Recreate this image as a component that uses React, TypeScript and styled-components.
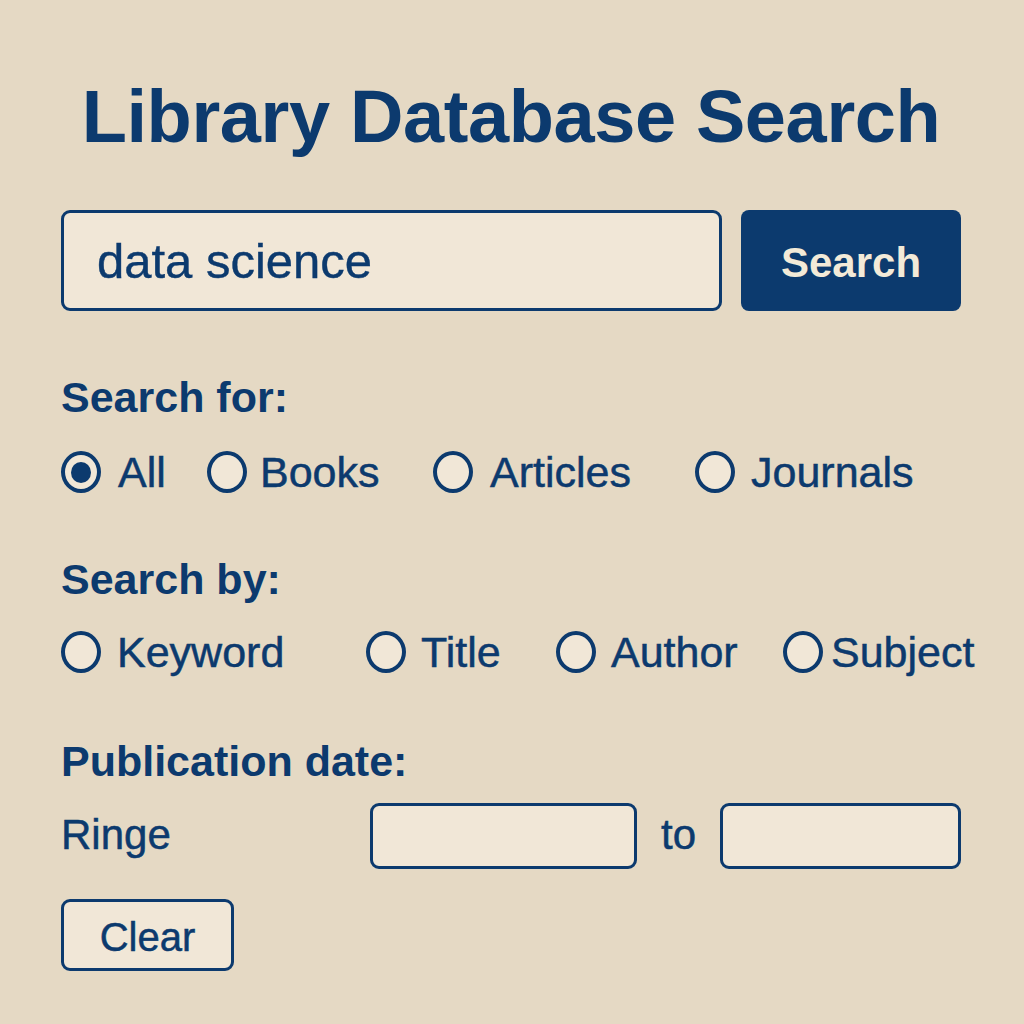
import React from "react";
import styled, { createGlobalStyle } from "styled-components";

const NAVY = "#0c3a6e";
const PAPER = "#e5d9c4";
const FIELD = "#f1e7d7";

const Global = createGlobalStyle`
  html, body { margin: 0; padding: 0; background: ${PAPER}; }
  body { font-family: "Liberation Sans", Arial, sans-serif; color: ${NAVY}; }
  * { box-sizing: border-box; }
`;

const Page = styled.main`
  width: 1024px;
  min-height: 1024px;
  padding: 74px 63px 0 61px;
  display: flex;
  flex-direction: column;
`;

const Title = styled.h1`
  margin: 0;
  font-size: 74px;
  line-height: 85px;
  font-weight: 700;
  text-align: center;
  letter-spacing: -0.4px;
  color: ${NAVY};
`;

const SearchRow = styled.div`
  margin-top: 51px;
  display: flex;
  gap: 19px;
  height: 101px;
`;

const QueryBox = styled.div`
  width: 661px;
  border: 3px solid ${NAVY};
  border-radius: 9px;
  background: ${FIELD};
  display: flex;
  align-items: center;
  padding-left: 33px;
  font-size: 49px;
  padding-top: 1px;
  -webkit-text-stroke: 0.4px ${NAVY};
`;

const SearchButton = styled.button`
  flex: 1;
  border: none;
  border-radius: 8px;
  background: ${NAVY};
  color: #f3ead8;
  font-family: inherit;
  font-size: 42px;
  font-weight: 700;
  padding: 5px 0 0;
`;

const Heading = styled.h2<{ $gap: number }>`
  margin: ${(p) => p.$gap}px 0 0;
  font-size: 43px;
  line-height: 52px;
  font-weight: 700;
  color: ${NAVY};
`;

const RadioRow = styled.div<{ $gap: number }>`
  margin-top: ${(p) => p.$gap}px;
  display: flex;
  align-items: center;
  height: 44px;
`;

const Option = styled.label<{ $width?: number; $labelGap?: number }>`
  display: flex;
  align-items: center;
  gap: ${(p) => p.$labelGap ?? 16}px;
  width: ${(p) => (p.$width ? `${p.$width}px` : "auto")};
  flex: none;
  font-size: 43px;
  line-height: 44px;
  -webkit-text-stroke: 0.5px ${NAVY};
`;

const Circle = styled.span<{ $on?: boolean }>`
  width: 40px;
  height: 42px;
  border-radius: 50%;
  border: 4px solid ${NAVY};
  background: ${FIELD};
  display: flex;
  align-items: center;
  justify-content: center;
  flex: none;
  &::after {
    content: "";
    display: ${(p) => (p.$on ? "block" : "none")};
    width: 20px;
    height: 21px;
    border-radius: 50%;
    background: ${NAVY};
  }
`;

const DateRow = styled.div`
  margin-top: 16px;
  display: flex;
  align-items: center;
  height: 66px;
  font-size: 42px;
  -webkit-text-stroke: 0.5px ${NAVY};
`;

const RangeLabel = styled.span`
  width: 309px;
  flex: none;
  padding-bottom: 2px;
`;

const DateField = styled.div<{ $width: number }>`
  width: ${(p) => p.$width}px;
  height: 66px;
  border: 3px solid ${NAVY};
  border-radius: 9px;
  background: ${FIELD};
  flex: none;
`;

const To = styled.span`
  margin: 0 24px 0 24px;
  padding-bottom: 2px;
`;

const ClearButton = styled.button`
  margin-top: 30px;
  width: 173px;
  height: 72px;
  border: 3px solid ${NAVY};
  border-radius: 9px;
  background: ${FIELD};
  color: ${NAVY};
  font-family: inherit;
  font-size: 40px;
  padding: 5px 0 0;
  align-self: flex-start;
  -webkit-text-stroke: 0.5px ${NAVY};
`;

type Opt = { label: string; width?: number; gap?: number; on?: boolean };

const typeOpts: Opt[] = [
  { label: "All", width: 146, gap: 17, on: true },
  { label: "Books", width: 226, gap: 13 },
  { label: "Articles", width: 262, gap: 17 },
  { label: "Journals", gap: 16 },
];

const byOpts: Opt[] = [
  { label: "Keyword", width: 305, gap: 16 },
  { label: "Title", width: 190, gap: 15 },
  { label: "Author", width: 227, gap: 15 },
  { label: "Subject", gap: 8 },
];

const Radios = ({ opts, gap }: { opts: Opt[]; gap: number }) => (
  <RadioRow $gap={gap}>
    {opts.map((o) => (
      <Option key={o.label} $width={o.width} $labelGap={o.gap}>
        <Circle $on={o.on} />
        {o.label}
      </Option>
    ))}
  </RadioRow>
);

export default function App() {
  return (
    <>
      <Global />
      <Page>
        <Title>Library Database Search</Title>
        <SearchRow>
          <QueryBox>data science</QueryBox>
          <SearchButton>Search</SearchButton>
        </SearchRow>
        <Heading $gap={60}>Search for:</Heading>
        <Radios opts={typeOpts} gap={27} />
        <Heading $gap={59}>Search by:</Heading>
        <Radios opts={byOpts} gap={25} />
        <Heading $gap={61}>Publication date:</Heading>
        <DateRow>
          <RangeLabel>Ringe</RangeLabel>
          <DateField $width={267} />
          <To>to</To>
          <DateField $width={241} />
        </DateRow>
        <ClearButton>Clear</ClearButton>
      </Page>
    </>
  );
}
